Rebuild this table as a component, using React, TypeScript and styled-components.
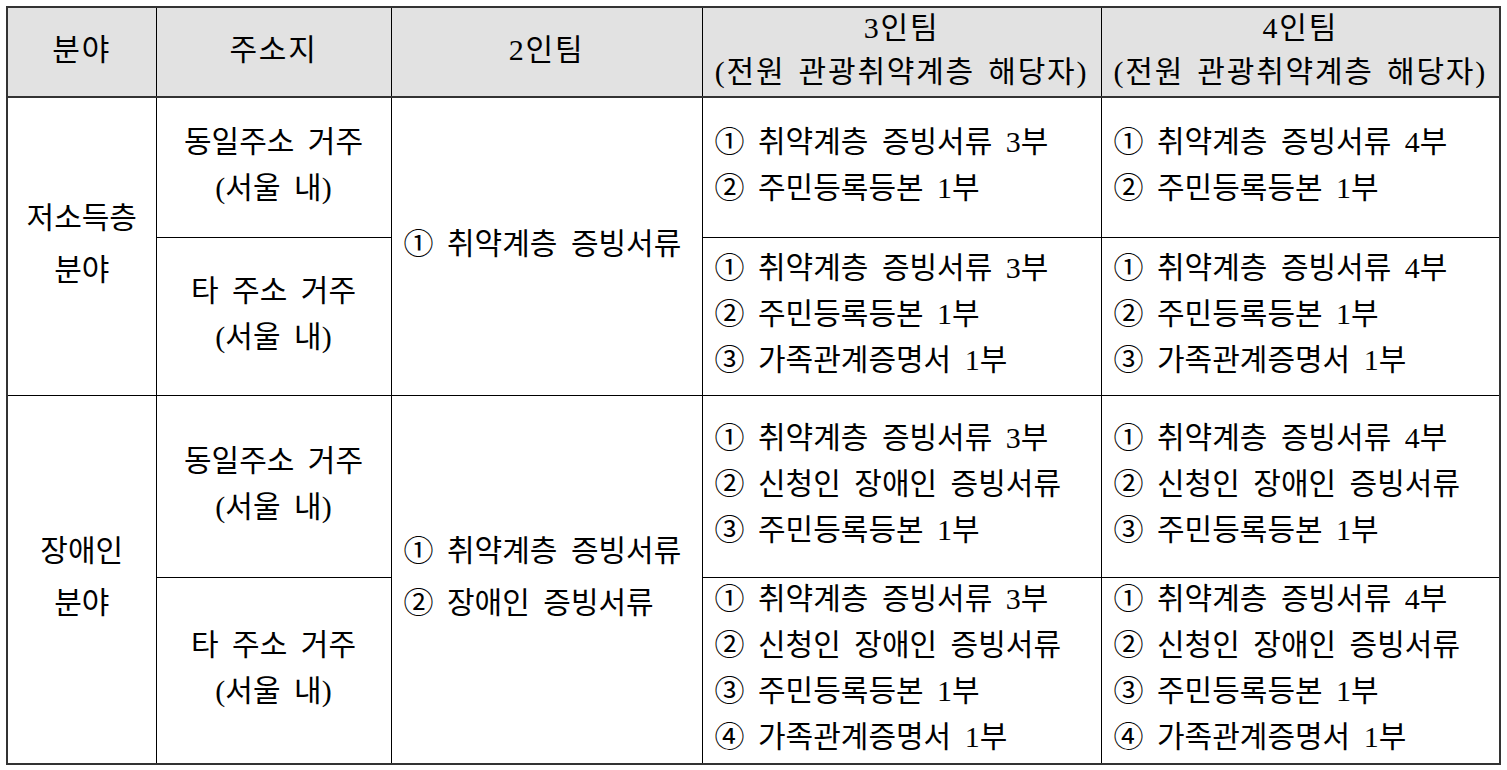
import React from "react";
import styled, { createGlobalStyle } from "styled-components";

const GlobalStyle = createGlobalStyle`
  html, body {
    margin: 0;
    padding: 0;
    background: #ffffff;
  }
  body {
    padding: 6px 0 0 6px;
    font-family: "Liberation Serif", "Noto Sans CJK KR", serif;
    color: #000000;
  }
`;

const Table = styled.table`
  border-collapse: collapse;
  table-layout: fixed;
  width: 1493px;
  border: 2px solid #333333;
  font-size: 30px;
  word-spacing: 6px;
`;

const Row = styled.tr<{ $height: number }>`
  height: ${(p) => p.$height}px;
`;

const HeadCell = styled.th`
  background: #e2e2e2;
  font-weight: 400;
  text-align: center;
  vertical-align: middle;
  border: 1px solid #000000;
  border-bottom: 2px solid #333333;
  padding: 0;
  letter-spacing: 1.8px;
  word-spacing: 4px;
  white-space: nowrap;
`;

const Cell = styled.td<{ $center?: boolean }>`
  border: 1px solid #000000;
  text-align: ${(p) => (p.$center ? "center" : "left")};
  vertical-align: middle;
  padding: 0 0 0 ${(p) => (p.$center ? 0 : 12)}px;
  white-space: nowrap;
`;

const Line = styled.div<{ $h: number }>`
  height: ${(p) => p.$h}px;
  line-height: ${(p) => p.$h - 4}px;
`;

const Lines = ({ items, h = 46 }: { items: string[]; h?: number }) => (
  <>
    {items.map((t, i) => (
      <Line key={i} $h={h}>
        {t}
      </Line>
    ))}
  </>
);

const lowIncomeSame3 = ["① 취약계층 증빙서류 3부", "② 주민등록등본 1부"];
const lowIncomeSame4 = ["① 취약계층 증빙서류 4부", "② 주민등록등본 1부"];
const lowIncomeOther3 = [
  "① 취약계층 증빙서류 3부",
  "② 주민등록등본 1부",
  "③ 가족관계증명서 1부",
];
const lowIncomeOther4 = [
  "① 취약계층 증빙서류 4부",
  "② 주민등록등본 1부",
  "③ 가족관계증명서 1부",
];
const disabledSame3 = [
  "① 취약계층 증빙서류 3부",
  "② 신청인 장애인 증빙서류",
  "③ 주민등록등본 1부",
];
const disabledSame4 = [
  "① 취약계층 증빙서류 4부",
  "② 신청인 장애인 증빙서류",
  "③ 주민등록등본 1부",
];
const disabledOther3 = [
  "① 취약계층 증빙서류 3부",
  "② 신청인 장애인 증빙서류",
  "③ 주민등록등본 1부",
  "④ 가족관계증명서 1부",
];
const disabledOther4 = [
  "① 취약계층 증빙서류 4부",
  "② 신청인 장애인 증빙서류",
  "③ 주민등록등본 1부",
  "④ 가족관계증명서 1부",
];

export default function App() {
  return (
    <>
      <GlobalStyle />
      <Table>
        <colgroup>
          <col style={{ width: 149 }} />
          <col style={{ width: 235 }} />
          <col style={{ width: 311 }} />
          <col style={{ width: 399 }} />
          <col style={{ width: 399 }} />
        </colgroup>
        <thead>
          <Row $height={88}>
            <HeadCell>
              <Lines items={["분야"]} h={44} />
            </HeadCell>
            <HeadCell>
              <Lines items={["주소지"]} h={44} />
            </HeadCell>
            <HeadCell>
              <Lines items={["2인팀"]} h={44} />
            </HeadCell>
            <HeadCell>
              <Lines items={["3인팀", "(전원 관광취약계층 해당자)"]} h={44} />
            </HeadCell>
            <HeadCell>
              <Lines items={["4인팀", "(전원 관광취약계층 해당자)"]} h={44} />
            </HeadCell>
          </Row>
        </thead>
        <tbody>
          <Row $height={140}>
            <Cell $center rowSpan={2}>
              <Lines items={["저소득층", "분야"]} h={52} />
            </Cell>
            <Cell $center>
              <Lines items={["동일주소 거주", "(서울 내)"]} />
            </Cell>
            <Cell rowSpan={2}>
              <Lines items={["① 취약계층 증빙서류"]} />
            </Cell>
            <Cell>
              <Lines items={lowIncomeSame3} />
            </Cell>
            <Cell>
              <Lines items={lowIncomeSame4} />
            </Cell>
          </Row>
          <Row $height={158}>
            <Cell $center>
              <Lines items={["타 주소 거주", "(서울 내)"]} />
            </Cell>
            <Cell>
              <Lines items={lowIncomeOther3} />
            </Cell>
            <Cell>
              <Lines items={lowIncomeOther4} />
            </Cell>
          </Row>
          <Row $height={182}>
            <Cell $center rowSpan={2}>
              <Lines items={["장애인", "분야"]} h={52} />
            </Cell>
            <Cell $center>
              <Lines items={["동일주소 거주", "(서울 내)"]} />
            </Cell>
            <Cell rowSpan={2}>
              <Lines items={["① 취약계층 증빙서류", "② 장애인 증빙서류"]} h={52} />
            </Cell>
            <Cell>
              <Lines items={disabledSame3} />
            </Cell>
            <Cell>
              <Lines items={disabledSame4} />
            </Cell>
          </Row>
          <Row $height={187}>
            <Cell $center>
              <Lines items={["타 주소 거주", "(서울 내)"]} />
            </Cell>
            <Cell>
              <Lines items={disabledOther3} />
            </Cell>
            <Cell>
              <Lines items={disabledOther4} />
            </Cell>
          </Row>
        </tbody>
      </Table>
    </>
  );
}
